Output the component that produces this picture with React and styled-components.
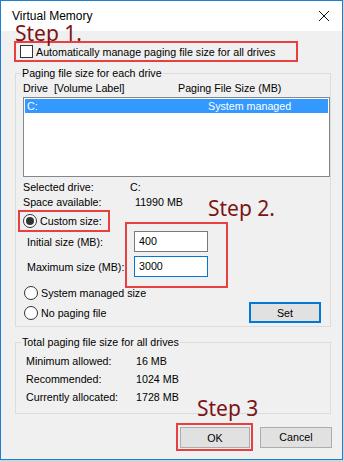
import styled, { createGlobalStyle } from "styled-components";

const Global = createGlobalStyle`
  html, body {
    margin: 0;
    padding: 0;
    background: #d4d4d4;
  }
  body {
    font-family: "Liberation Sans", Arial, sans-serif;
    font-size: 10.7px;
    color: #000;
  }
`;

const Window = styled.div`
  position: relative;
  box-sizing: border-box;
  width: 343px;
  height: 460px;
  border: 1px solid #1c7fd6;
  background: #f0f0f0;
  display: flex;
  flex-direction: column;
  white-space: nowrap;
`;

const TitleBar = styled.div`
  height: 30px;
  background: #fff;
  display: flex;
  align-items: center;
  justify-content: space-between;
  padding: 0 12px 0 11px;
  font-size: 12px;
`;

const Body = styled.div`
  padding: 10px 10px 0 13px;
  display: flex;
  flex-direction: column;
`;

const Highlight = styled.div`
  box-sizing: border-box;
  display: flex;
  align-items: center;
  border: 2px solid #e8403f;
  width: ${({ $w }) => $w}px;
  height: ${({ $h }) => $h}px;
  padding-left: ${({ $pl }) => $pl || 0}px;
  margin-left: ${({ $ml }) => $ml || 0}px;
  gap: 3px;
`;

const CheckBox = styled.span`
  box-sizing: border-box;
  width: 13px;
  height: 13px;
  border: 1px solid #333;
  background: #fff;
`;

const Radio = styled.span`
  box-sizing: border-box;
  width: 14px;
  height: 14px;
  border-radius: 50%;
  border: 1px solid #333;
  background: #fff;
  display: flex;
  align-items: center;
  justify-content: center;

  &::after {
    content: "";
    width: 8px;
    height: 8px;
    border-radius: 50%;
    background: ${({ $on }) => ($on ? "#333" : "transparent")};
  }
`;

const Group = styled.fieldset`
  margin: ${({ $mt }) => $mt}px 0 0 1px;
  width: 316px;
  box-sizing: border-box;
  border: 1px solid #dcdcdc;
  padding: 0 1px ${({ $pb }) => $pb}px 5px;
  min-width: 0;
`;

const Legend = styled.legend`
  padding: 0 1px;
  line-height: 15px;
`;

const Inner = styled.div`
  padding-left: 2px;
  display: flex;
  flex-direction: column;
`;

const HeaderRow = styled.div`
  display: flex;
  line-height: 15px;
  height: 15px;
`;

const Col = styled.span`
  width: ${({ $w }) => $w}px;
  flex: none;
  white-space: pre;
`;

const ListBox = styled.div`
  box-sizing: border-box;
  margin-top: 1px;
  width: 307px;
  height: 80px;
  border: 1px solid #828790;
  background: #fff;
  padding: 1px;
`;

const ListRow = styled.div`
  display: flex;
  height: 14px;
  line-height: 14px;
  padding-left: 2px;
  background: #3399ff;
  color: #fff;
`;

const InfoRow = styled.div`
  display: flex;
  line-height: ${({ $lh }) => $lh}px;
  height: ${({ $lh }) => $lh}px;
  padding-left: ${({ $pl }) => $pl || 0}px;
  margin-top: ${({ $mt }) => $mt || 0}px;
`;

const SizeGrid = styled.div`
  display: grid;
  grid-template-columns: 107px 74px;
  row-gap: 4px;
  margin-top: -1px;
  padding-left: 4px;
  align-items: center;
`;

const Field = styled.div`
  box-sizing: border-box;
  height: 21px;
  border: 1px solid ${({ $focus }) => ($focus ? "#0078d7" : "#7a7a7a")};
  background: #fff;
  padding-left: 4px;
  line-height: 19px;
`;

const RadioRow = styled.div`
  display: flex;
  align-items: center;
  gap: 3px;
  height: ${({ $h }) => $h}px;
  margin-top: ${({ $mt }) => $mt}px;
  padding-left: 1px;
`;

const SplitRow = styled.div`
  display: flex;
  align-items: center;
  justify-content: space-between;
  margin-top: 2px;
  padding-right: 8px;
`;

const Button = styled.div`
  box-sizing: border-box;
  width: ${({ $w }) => $w || 72}px;
  height: 21px;
  display: flex;
  align-items: center;
  justify-content: center;
  background: #e1e1e1;
  border: ${({ $primary }) =>
    $primary ? "2px solid #0078d7" : "1px solid #adadad"};
`;

const Footer = styled.div`
  display: flex;
  justify-content: flex-end;
  align-items: center;
  gap: 7px;
  margin-top: 9px;
`;

const OkFrame = styled.div`
  box-sizing: border-box;
  border: 2px solid #e8403f;
  padding: 2px 1px 1px 2px;
`;

const Step = styled.div`
  position: absolute;
  left: ${({ $x }) => $x}px;
  top: ${({ $y }) => $y}px;
  font-family: "Noto Sans", "Open Sans", sans-serif;
  font-size: 21px;
  line-height: 22px;
  color: #7d1416;
  white-space: nowrap;
`;

const StepBox = styled.div`
  position: absolute;
  left: 124px;
  top: 221px;
  width: 103px;
  height: 66px;
  box-sizing: border-box;
  border: 2px solid #e8403f;
`;

function CloseIcon() {
  return (
    <svg width="12" height="12" viewBox="0 0 12 12">
      <path d="M1 1 L11 11 M11 1 L1 11" stroke="#111" strokeWidth="1" fill="none" />
    </svg>
  );
}

export default function App() {
  return (
    <>
      <Global />
      <Window>
        <TitleBar>
          <span>Virtual Memory</span>
          <CloseIcon />
        </TitleBar>
        <Body>
          <Highlight $w={284} $h={21} $pl={4}>
            <CheckBox />
            <span>Automatically manage paging file size for all drives</span>
          </Highlight>

          <Group $mt={4} $pb={3}>
            <Legend>Paging file size for each drive</Legend>
            <Inner>
              <HeaderRow>
                <Col $w={155}>{"Drive  [Volume Label]"}</Col>
                <Col $w={140}>Paging File Size (MB)</Col>
              </HeaderRow>
              <ListBox>
                <ListRow>
                  <Col $w={181}>C:</Col>
                  <Col $w={110}>System managed</Col>
                </ListRow>
              </ListBox>
              <InfoRow $lh={15} $mt={3}>
                <Col $w={107}>Selected drive:</Col>
                <span>C:</span>
              </InfoRow>
              <InfoRow $lh={15}>
                <Col $w={112}>Space available:</Col>
                <span>11990 MB</span>
              </InfoRow>
              <Highlight $w={92} $h={22} $pl={3} $ml={-5}>
                <Radio $on />
                <span>Custom size:</span>
              </Highlight>
              <SizeGrid>
                <span>Initial size (MB):</span>
                <Field>400</Field>
                <span>Maximum size (MB):</span>
                <Field $focus>3000</Field>
              </SizeGrid>
              <RadioRow $h={14} $mt={9}>
                <Radio />
                <span>System managed size</span>
              </RadioRow>
              <SplitRow>
                <RadioRow $h={20} $mt={0}>
                  <Radio />
                  <span>No paging file</span>
                </RadioRow>
                <Button $primary>Set</Button>
              </SplitRow>
            </Inner>
          </Group>

          <Group $mt={8} $pb={7}>
            <Legend>Total paging file size for all drives</Legend>
            <Inner>
              <InfoRow $lh={18} $pl={3} $mt={2}>
                <Col $w={110}>Minimum allowed:</Col>
                <span>16 MB</span>
              </InfoRow>
              <InfoRow $lh={18} $pl={3}>
                <Col $w={110}>Recommended:</Col>
                <span>1024 MB</span>
              </InfoRow>
              <InfoRow $lh={18} $pl={3}>
                <Col $w={110}>Currently allocated:</Col>
                <span>1728 MB</span>
              </InfoRow>
            </Inner>
          </Group>

          <Footer>
            <OkFrame>
              <Button $w={70}>OK</Button>
            </OkFrame>
            <Button>Cancel</Button>
          </Footer>
        </Body>

        <Step $x={14} $y={21}>Step 1.</Step>
        <Step $x={207} $y={196}>Step 2.</Step>
        <Step $x={196} $y={396}>Step 3</Step>
        <StepBox />
      </Window>
    </>
  );
}
